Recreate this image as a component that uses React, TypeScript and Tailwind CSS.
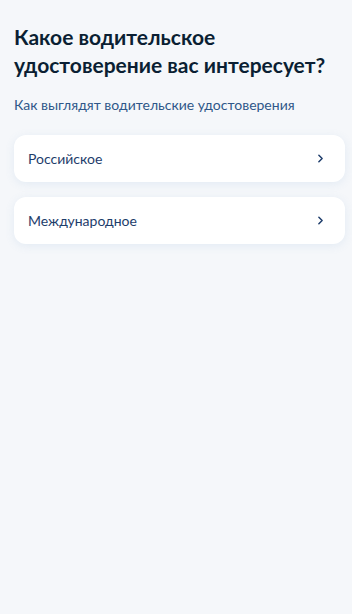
import { ChevronRight } from "lucide-react";

const options = ["Российское", "Международное"];

export default function App() {
  return (
    <div
      className="min-h-[614px] w-full bg-[#f5f7fa] pl-[14px] pr-[7px] pt-[23px]"
      style={{ fontFamily: "Lato, 'Noto Sans', sans-serif" }}
    >
      <h1 className="text-[21px] font-bold leading-[28px] text-[#0b1f33]">
        Какое водительское удостоверение вас интересует?
      </h1>
      <a className="mt-[16px] block text-[14px] leading-[20px] text-[#2f5789]">
        Как выглядят водительские удостоверения
      </a>

      <div className="mt-[20px] flex flex-col gap-[15px]">
        {options.map((o) => (
          <button
            key={o}
            className="flex h-[47px] w-full items-center justify-between rounded-[12px] bg-white pl-[14px] pr-[18px] text-left shadow-[0_2px_10px_rgba(102,150,200,0.12)]"
          >
            <span className="text-[14px] text-[#1e3d6b]">{o}</span>
            <ChevronRight size={13} strokeWidth={2.75} className="text-[#1e3d6b]" />
          </button>
        ))}
      </div>
    </div>
  );
}
